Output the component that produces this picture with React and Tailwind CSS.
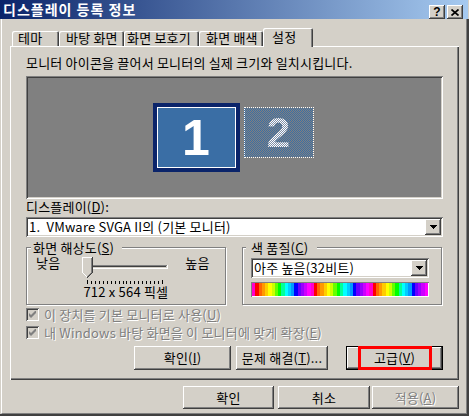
const raised = "shadow-[inset_-1px_-1px_#404040,inset_1px_1px_#ffffff,inset_-2px_-2px_#808080,inset_2px_2px_#d4d0c8]";
const sunken = "shadow-[inset_1px_1px_#808080,inset_-1px_-1px_#ffffff,inset_2px_2px_#404040,inset_-2px_-2px_#d4d0c8]";
const etched = "border border-[#808080] shadow-[1px_1px_0_#ffffff,inset_1px_1px_0_#ffffff]";
const greyed = "text-[#808080] [text-shadow:1px_1px_0_#ffffff]";

const rainbow = [
  '#ff00cc', '#ff0000', '#ff6600', '#ff9900', '#ffcc00', '#ffff00', '#ccff00', '#66ff00', '#00ff00',
  '#00ff99', '#00ffff', '#00ccff', '#0099ff', '#0000ff', '#6600ff', '#9900ff', '#cc00ff', '#ff00ff',
];

function TitleButton({ children }) {
  return (
    <div className={`w-[16px] h-[14px] bg-[#d4d0c8] ${raised} flex items-center justify-center`}>{children}</div>
  );
}

function Tab({ active, className, children }) {
  if (active) {
    return (
      <div className={`relative z-10 -mb-px h-[19px] bg-[#d4d0c8] rounded-t-[2px] pt-[2px] shadow-[inset_1px_1px_#ffffff,inset_-1px_0_#404040,inset_-2px_0_#808080] ${className}`}>
        {children}
      </div>
    );
  }
  return (
    <div className={`h-[15px] rounded-t-[2px] shadow-[inset_1px_1px_#ffffff,inset_-1px_0_#404040,inset_-2px_0_#808080] ${className}`}>
      {children}
    </div>
  );
}

function DropButton() {
  return (
    <div className={`w-[16px] h-[16px] bg-[#d4d0c8] ${raised} flex items-center justify-center`}>
      <svg width="7" height="4" shapeRendering="crispEdges">
        <rect x="0" y="0" width="7" height="1" fill="#000" />
        <rect x="1" y="1" width="5" height="1" fill="#000" />
        <rect x="2" y="2" width="3" height="1" fill="#000" />
        <rect x="3" y="3" width="1" height="1" fill="#000" />
      </svg>
    </div>
  );
}

function Combo({ className, children }) {
  return (
    <div className={`h-[20px] bg-white ${sunken} flex items-center justify-between pl-[3px] pr-[2px] ${className}`}>
      <span className="whitespace-pre">{children}</span>
      <DropButton />
    </div>
  );
}

function Btn({ className, children }) {
  return (
    <div className={`bg-[#d4d0c8] ${raised} flex items-center justify-center ${className}`}>{children}</div>
  );
}

function Check({ children }) {
  return (
    <div className="flex items-center h-[13px]">
      <div className={`w-[13px] h-[13px] shrink-0 bg-[#d4d0c8] ${sunken} flex items-center justify-center`}>
        <svg width="7" height="7" viewBox="0 0 7 7">
          <path d="M0 2L2 4L7 -1V2L2 7L0 5Z" fill="#808080" />
        </svg>
      </div>
      <span className={`ml-[5px] whitespace-nowrap ${greyed}`}>{children}</span>
    </div>
  );
}

function Slider() {
  const ticks = [];
  for (let i = 0; i <= 19; i++) {
    const x = 5 + Math.round((i * 75) / 19);
    const end = i === 0 || i === 19;
    ticks.push(<rect key={i} x={x} y={end ? 23 : 24} width="1" height={end ? 4 : 3} fill="#000" />);
  }
  const stairs = [1, 2, 3, 4];
  return (
    <svg width="87" height="27" shapeRendering="crispEdges">
      <rect x="4" y="8" width="81" height="1" fill="#808080" />
      <rect x="4" y="8" width="1" height="4" fill="#808080" />
      <rect x="5" y="9" width="79" height="1" fill="#404040" />
      <rect x="4" y="11" width="82" height="1" fill="#ffffff" />
      <rect x="85" y="8" width="1" height="4" fill="#ffffff" />
      <polygon points="0,0 11,0 11,15 5.5,20.5 0,15" fill="#d4d0c8" />
      <rect x="0" y="0" width="10" height="1" fill="#ffffff" />
      <rect x="0" y="0" width="1" height="16" fill="#ffffff" />
      {stairs.map((s) => (
        <rect key={'w' + s} x={s} y={15 + s} width="1" height="1" fill="#ffffff" />
      ))}
      <rect x="10" y="0" width="1" height="16" fill="#404040" />
      <rect x="9" y="1" width="1" height="15" fill="#808080" />
      {stairs.map((s) => (
        <rect key={'d' + s} x={10 - s} y={15 + s} width="1" height="1" fill="#404040" />
      ))}
      {stairs.map((s) => (
        <rect key={'g' + s} x={9 - s} y={15 + s} width="1" height="1" fill="#808080" />
      ))}
      <rect x="5" y="20" width="1" height="1" fill="#404040" />
      {ticks}
    </svg>
  );
}

function ColorBar() {
  const n = rainbow.length * 3;
  const w = 176;
  return (
    <svg width={w} height="13" shapeRendering="crispEdges">
      {Array.from({ length: n }).map((_, i) => {
        const x0 = Math.round((i * w) / n);
        const x1 = Math.round(((i + 1) * w) / n);
        return <rect key={i} x={x0} y="0" width={x1 - x0} height="13" fill={rainbow[i % rainbow.length]} />;
      })}
    </svg>
  );
}

export default function App() {
  return (
    <div className="w-[469px] h-[416px] bg-[#d4d0c8] flex flex-col overflow-hidden font-[family-name:'Noto_Sans_CJK_KR',sans-serif] text-[13px] leading-[14px] tracking-[0.2px] text-black">
      <div className="h-[19px] w-[468px] shrink-0 flex items-start justify-between bg-[linear-gradient(to_right,#0a246a,#a6caf0)]">
        <span className="pl-[3px] pt-[2px] text-white font-bold text-[14px] leading-[15px] tracking-[1px]">디스플레이 등록 정보</span>
        <div className="flex gap-[2px] mt-[5px] mr-[5px]">
          <TitleButton>
            <span className="font-bold text-[12px] leading-[12px] tracking-normal font-[family-name:'Liberation_Sans',sans-serif]">?</span>
          </TitleButton>
          <TitleButton>
            <svg width="8" height="7" viewBox="0 0 8 7">
              <path d="M0.5 0.5L7.5 6.5M7.5 0.5L0.5 6.5" stroke="#000" strokeWidth="1.7" />
            </svg>
          </TitleButton>
        </div>
      </div>

      <div className="flex-1 flex border-r-2 border-b-2 border-[#404040]">
        <div className="flex-1 ml-px border-l border-l-white border-r border-r-[#808080] border-b border-b-[#808080] flex flex-col">
          <div className="mt-[9px] ml-[10px] h-[18px] flex items-end">
            <Tab className="w-[47px] pl-[6px]">테마</Tab>
            <Tab className="w-[65px] pl-[7px]">바탕 화면</Tab>
            <Tab className="w-[75px] pl-[3px]">화면 보호기</Tab>
            <Tab className="w-[64px] pl-[7px]">화면 배색</Tab>
            <Tab active className="w-[50px] pl-[9px]">설정</Tab>
          </div>

          <div className="relative ml-[8px] w-[449px] h-[334px] shrink-0 px-[16px] pt-[10px] flex flex-col shadow-[inset_1px_1px_#ffffff,inset_-1px_-1px_#404040,inset_-2px_-2px_#808080]">
            <div>모니터 아이콘을 끌어서 모니터의 실제 크기와 일치시킵니다.</div>

            <div className="mt-[6px] h-[123px] bg-[#808080] shadow-[inset_1px_1px_#808080,inset_-1px_-1px_#ffffff,inset_2px_2px_#404040,inset_-2px_-2px_#d4d0c8] flex justify-center items-start pt-[27px] pr-[3px]">
              <div className="w-[87px] h-[69px] border-4 border-[#0a246a]">
                <div className="w-full h-full border border-white bg-[#3a6ea5] flex items-center justify-center">
                  <span className="text-white font-bold text-[50px] leading-none tracking-normal font-[family-name:'Liberation_Sans',sans-serif]">1</span>
                </div>
              </div>
              <div className="ml-[4px] mt-[4px] w-[70px] h-[51px] border border-dotted border-white bg-[repeating-conic-gradient(#3a6ea5_0_25%,#808080_0_50%)] bg-[length:2px_2px] flex items-center justify-center">
                <span className="font-bold text-[42px] leading-none tracking-normal font-[family-name:'Liberation_Sans',sans-serif] text-transparent bg-clip-text bg-[repeating-conic-gradient(#ffffff_0_25%,#7d8fa8_0_50%)] bg-[length:2px_2px]">2</span>
              </div>
            </div>

            <div className="mt-[1px]">디스플레이(<u>D</u>):</div>
            <Combo className="mt-[3px] w-full">1.  VMware SVGA II의 (기본 모니터)</Combo>

            <div className="mt-[10px] flex gap-[16px]">
              <div className={`relative w-[200px] h-[58px] ${etched} pt-[8px] pl-[9px] flex items-start`}>
                <span className="absolute -top-[7px] left-[4px] pl-[2px] pr-[8px] bg-[#d4d0c8]">화면 해상도(<u>S</u>)</span>
                <span>낮음</span>
                <div className="ml-[22px] mt-px w-[87px] flex flex-col items-center">
                  <Slider />
                  <span className="mt-[1px] whitespace-nowrap">712 x 564 픽셀</span>
                </div>
                <span className="ml-[16px]">높음</span>
              </div>
              <div className={`relative w-[200px] h-[58px] ${etched} pt-[10px] pl-[8px] flex flex-col`}>
                <span className="absolute -top-[7px] left-[3px] pl-[5px] pr-[9px] bg-[#d4d0c8]">색 품질(<u>C</u>)</span>
                <Combo className="w-[178px]">아주 높음(32비트)</Combo>
                <div className="mt-[4px] w-[178px] h-[15px] p-px shadow-[inset_1px_1px_#808080,inset_-1px_-1px_#ffffff]">
                  <ColorBar />
                </div>
              </div>
            </div>

            <div className="mt-[3px] flex flex-col gap-[5px]">
              <Check>이 장치를 기본 모니터로 사용(<u>U</u>)</Check>
              <Check>내 Windows 바탕 화면을 이 모니터에 맞게 확장(<u>E</u>)</Check>
            </div>

            <div className="mt-[7px] flex justify-end">
              <Btn className="w-[97px] h-[24px]">확인(<u>I</u>)</Btn>
              <Btn className="ml-[5px] w-[92px] h-[24px]">문제 해결(<u>T</u>)...</Btn>
              <div className="relative ml-[18px] w-[97px] h-[24px] border border-black">
                <Btn className="w-full h-full">고급(<u>V</u>)</Btn>
                <div className="absolute left-[11px] -top-px w-[74px] h-[24px] border-[3px] border-[#ff0000]" />
              </div>
            </div>
          </div>

          <div className="mt-[6px] pr-[7px] flex justify-end">
            <Btn className="w-[91px] h-[23px]">확인</Btn>
            <Btn className="ml-[4px] w-[92px] h-[23px]">취소</Btn>
            <Btn className={`ml-[2px] w-[87px] h-[23px] ${greyed}`}>적용(<u>A</u>)</Btn>
          </div>
        </div>
      </div>
    </div>
  );
}
